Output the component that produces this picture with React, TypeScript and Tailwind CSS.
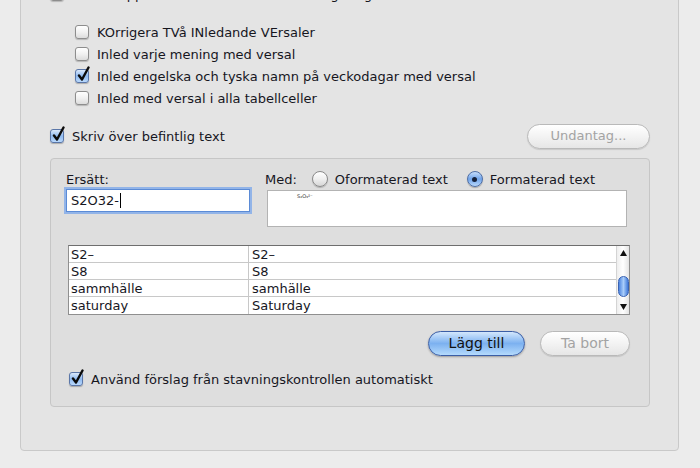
import React from "react"

const txt = "text-[13px] text-[#16161e] font-['Lucida_Grande','DejaVu_Sans',sans-serif] leading-none whitespace-nowrap"

function Check({ checked = false }: { checked?: boolean }) {
  return (
    <span className="relative inline-block w-[14px] h-[14px] shrink-0">
      <span
        className={
          checked
            ? "absolute inset-0 rounded-[3px] border border-[#5a76a8] bg-gradient-to-b from-[#dbe9fb] via-[#8fbaf0] to-[#b9d8fb] shadow-[0_1px_1px_rgba(0,0,0,0.25)]"
            : "absolute inset-0 rounded-[3px] border border-[#8d8d8d] bg-gradient-to-b from-[#ffffff] via-[#f1f1f1] to-[#dcdcdc] shadow-[0_1px_1px_rgba(0,0,0,0.2)]"
        }
      />
      {checked && (
        <svg className="absolute left-[1px] -top-[3px] w-[15px] h-[16px]" viewBox="0 0 15 16">
          <path d="M3 9.5 L6 13.5 L12.5 1.5" fill="none" stroke="#0b0b0b" strokeWidth="2.4" strokeLinecap="round" strokeLinejoin="round" />
        </svg>
      )}
    </span>
  )
}

function Radio({ checked = false, className = "" }: { checked?: boolean; className?: string }) {
  return (
    <span
      className={
        (checked
          ? "flex items-center justify-center w-[16px] h-[16px] rounded-full border border-[#4e6ea6] bg-gradient-to-b from-[#c7defa] via-[#6fa3ea] to-[#b8d8fb] shadow-[0_1px_1px_rgba(0,0,0,0.25)] shrink-0 "
          : "flex items-center justify-center w-[16px] h-[16px] rounded-full border border-[#8a8a8a] bg-gradient-to-b from-[#ffffff] via-[#efefef] to-[#d6d6d6] shadow-[0_1px_1px_rgba(0,0,0,0.2)] shrink-0 ") +
        className
      }
    >
      {checked && <span className="w-[5px] h-[5px] rounded-full bg-[#15213a]" />}
    </span>
  )
}

function CheckRow({ label, checked, className = "" }: { label: string; checked?: boolean; className?: string }) {
  return (
    <div className={"flex items-center gap-[8px] " + className}>
      <Check checked={checked} />
      <span className={txt}>{label}</span>
    </div>
  )
}

const rows: [string, string][] = [
  ["S2–", "S2–"],
  ["S8", "S8"],
  ["sammhälle", "samhälle"],
  ["saturday", "Saturday"],
]

export default function App() {
  return (
    <div className="w-[700px] h-[468px] bg-[#ececec] overflow-hidden">
      <div className="ml-[20px] w-[659px] -mt-[30px] h-[481px] bg-[#e4e4e4] border border-[#c9c9c9] rounded-b-[4px] pl-[29px] pt-[16px]">
        {/* partly hidden row at the top */}
        <CheckRow label="Visa knappar för alternativ för Autokorrigering" className="h-[14px]" />

        <div className="ml-[25px] mt-[20px]">
          <CheckRow label="KOrrigera TVå INledande VErsaler" className="h-[22px]" />
          <CheckRow label="Inled varje mening med versal" className="h-[22px]" />
          <CheckRow checked label="Inled engelska och tyska namn på veckodagar med versal" className="h-[22px]" />
          <CheckRow label="Inled med versal i alla tabellceller" className="h-[22px]" />
        </div>

        <div className="mt-[14px] w-[600px] h-[26px] flex items-center justify-between">
          <CheckRow checked label="Skriv över befintlig text" />
          <button className="w-[123px] h-[25px] rounded-full border border-[#b9b9b9] bg-gradient-to-b from-[#ffffff] via-[#f3f3f3] to-[#e6e6e6] text-[13px] text-[#a3a3a3] font-['Lucida_Grande','DejaVu_Sans',sans-serif] shadow-[0_1px_1px_rgba(0,0,0,0.12)]">
            Undantag...
          </button>
        </div>

        {/* group box */}
        <div className="mt-[9px] w-[600px] h-[249px] bg-[#dedede] border border-[#c6c6c6] rounded-[4px] pl-[15px] pt-[11px]">
          <div className="flex">
            <div className="w-[184px]">
              <div className={txt + " h-[18px] flex items-center"}>Ersätt:</div>
              <div className="mt-[1px] h-[23px] bg-white border border-[#5b8bd6] shadow-[0_0_0_2px_rgba(120,165,235,0.75)] flex items-center pl-[4px]">
                <span className={"text-[13px] text-[#16161e] font-['Lucida_Grande','DejaVu_Sans',sans-serif] leading-none"}>S2O32-</span>
                <span className="ml-[1px] w-[1px] h-[15px] bg-black" />
              </div>
            </div>
            <div className="ml-[15px]">
              <div className="h-[18px] flex items-center">
                <span className={txt}>Med:</span>
                <Radio className="ml-[15px]" />
                <span className={txt + " ml-[7px]"}>Oformaterad text</span>
                <Radio checked className="ml-[19px]" />
                <span className={txt + " ml-[7px]"}>Formaterad text</span>
              </div>
              <div className="mt-[2px] ml-[2px] w-[360px] h-[37px] bg-white border border-[#b3b3b3] relative">
                <span className="absolute left-[29px] top-[3px] text-[5px] leading-none text-[#333] font-['DejaVu_Sans',sans-serif]">S₂O₃²⁻</span>
              </div>
            </div>
          </div>

          {/* table */}
          <div className="mt-[18px] ml-[2px] w-[562px] h-[70px] bg-white border border-[#8f8f8f] border-t-[#6e6e6e] flex">
            <div className="flex-1">
              {rows.map(([a, b], i) => (
                <div key={i} className={"flex h-[17px] " + (i < 3 ? "border-b border-[#c8c8c8]" : "")}>
                  <div className="w-[180px] border-r border-[#c8c8c8] pl-[2px] flex items-center">
                    <span className={txt}>{a}</span>
                  </div>
                  <div className="flex-1 pl-[3px] flex items-center">
                    <span className={txt}>{b}</span>
                  </div>
                </div>
              ))}
            </div>
            <div className="w-[13px] border-l border-[#d4d4d4] bg-gradient-to-r from-[#eeeeee] via-[#ffffff] to-[#e4e4e4] flex flex-col items-center">
              <svg className="mt-[4px] w-[7px] h-[6px]" viewBox="0 0 7 6"><path d="M3.5 0 L7 6 L0 6 Z" fill="#111" /></svg>
              <div className="mt-[20px] w-[11px] h-[21px] rounded-full border border-[#3a63b3] bg-gradient-to-r from-[#4f86e0] via-[#a9cdfa] to-[#3f78d8]" />
              <svg className="mt-[7px] w-[7px] h-[6px]" viewBox="0 0 7 6"><path d="M0 0 L7 0 L3.5 6 Z" fill="#111" /></svg>
            </div>
          </div>

          {/* buttons */}
          <div className="mt-[16px] ml-[2px] w-[562px] h-[25px] flex justify-end gap-[15px]">
            <button className="w-[97px] h-[25px] rounded-full border border-[#3b5ea6] bg-gradient-to-b from-[#d3e7fc] via-[#7cb1f0] to-[#b4dafc] text-[14px] text-[#111] font-['Lucida_Grande','DejaVu_Sans',sans-serif] shadow-[0_1px_2px_rgba(0,0,0,0.3)]">
              Lägg till
            </button>
            <button className="w-[90px] h-[25px] rounded-full border border-[#b9b9b9] bg-gradient-to-b from-[#ffffff] via-[#f3f3f3] to-[#e6e6e6] text-[14px] text-[#a3a3a3] font-['Lucida_Grande','DejaVu_Sans',sans-serif] shadow-[0_1px_1px_rgba(0,0,0,0.12)]">
              Ta bort
            </button>
          </div>

          <CheckRow checked label="Använd förslag från stavningskontrollen automatiskt" className="mt-[13px] ml-[3px] h-[20px]" />
        </div>
      </div>
    </div>
  )
}
